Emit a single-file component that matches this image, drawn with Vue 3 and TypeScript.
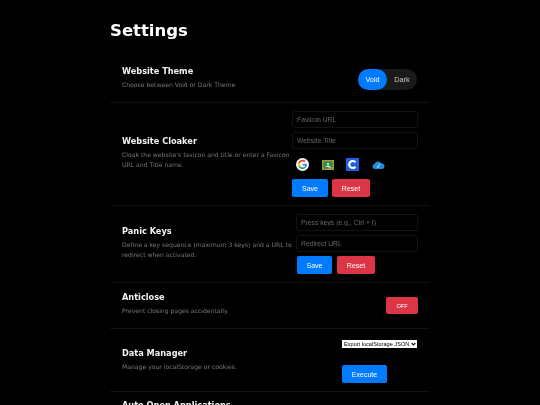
<template>
  <div class="page">
    <h1 class="page-title">Settings</h1>

    <section class="row">
      <div class="info">
        <h2>Website Theme</h2>
        <p>Choose between Void or Dark Theme</p>
      </div>
      <div class="theme-toggle">
        <span class="toggle-opt active">Void</span>
        <span class="toggle-opt">Dark</span>
      </div>
    </section>

    <section class="row">
      <div class="info">
        <h2>Website Cloaker</h2>
        <p>Cloak the website's favicon and title or enter a Favicon URL and Title name.</p>
      </div>
      <div class="controls cloak-controls">
        <input class="field" placeholder="Favicon URL" />
        <input class="field" placeholder="Website Title" />
        <div class="presets">
          <svg viewBox="0 0 48 48" width="13" height="13">
            <circle cx="24" cy="24" r="24" fill="#fff" />
            <path fill="#ea4335" d="M24 13c3 0 5.400 1 7.300 2.800l4.500-4.500C32.800 8.500 28.800 6.800 24 6.800c-6.800 0-12.600 3.900-15.400 9.500l5.300 4.100C15.200 16.200 19.200 13 24 13z" />
            <path fill="#4285f4" d="M41 24.400c0-1.300-.1-2.200-.3-3.200H24v6.200h9.700c-.4 2.300-1.700 4.300-3.800 5.600l5.100 4c3.100-2.800 6-7.300 6-12.600z" />
            <path fill="#fbbc05" d="M13.900 27.600c-.4-1.100-.6-2.300-.6-3.600s.2-2.500.6-3.600l-5.300-4.100C7.400 18.600 6.800 21.200 6.800 24s.6 5.400 1.800 7.700l5.300-4.100z" />
            <path fill="#34a853" d="M24 41.200c4.700 0 8.600-1.500 11-4.200l-5.100-4c-1.400.9-3.200 1.600-5.900 1.600-4.800 0-8.800-3.200-10.100-7l-5.300 4.100c2.800 5.600 8.600 9.500 15.400 9.500z" />
          </svg>
          <svg viewBox="0 0 24 20" width="12" height="10">
            <rect width="24" height="20" fill="#a89a35" />
            <rect x="2.500" y="2.500" width="19" height="15" fill="#3a8a4a" />
            <circle cx="12" cy="8" r="2.200" fill="#cfe8d2" />
            <path fill="#cfe8d2" d="M7.500 14c.5-2 2.400-3 4.500-3s4 1 4.500 3z" />
            <rect x="13" y="15" width="6" height="1.400" fill="#fff" />
          </svg>
          <svg viewBox="0 0 26 26" width="13" height="13">
            <rect width="26" height="26" fill="#1f5fe0" />
            <path fill="none" stroke="#fff" stroke-width="4.400" d="M18.800 8.500A7 7 0 1 0 18.800 17.500" />
          </svg>
          <svg viewBox="0 0 26 16" width="13" height="8">
            <path fill="#1d8fd6" d="M6 16a5 5 0 0 1-1-9.900A7.500 7.500 0 0 1 18.500 4.500 5.800 5.800 0 0 1 20 16z" />
            <path fill="none" stroke="#d5efff" stroke-width="1.600" d="M10 11l2 2.500 4-8" />
          </svg>
        </div>
        <div class="btn-row">
          <button class="btn btn-blue">Save</button>
          <button class="btn btn-red">Reset</button>
        </div>
      </div>
    </section>

    <section class="row">
      <div class="info">
        <h2>Panic Keys</h2>
        <p>Define a key sequence (maximum 3 keys) and a URL to redirect when activated.</p>
      </div>
      <div class="controls panic-controls">
        <input class="field" placeholder="Press keys (e.g., Ctrl + I)" />
        <input class="field" placeholder="Redirect URL" />
        <div class="btn-row panic-btns">
          <button class="btn btn-blue">Save</button>
          <button class="btn btn-red">Reset</button>
        </div>
      </div>
    </section>

    <section class="row">
      <div class="info">
        <h2>Anticlose</h2>
        <p>Prevent closing pages accidentally.</p>
      </div>
      <button class="btn btn-red btn-off">OFF</button>
    </section>

    <section class="row row-data">
      <div class="info">
        <h2>Data Manager</h2>
        <p>Manage your localStorage or cookies.</p>
      </div>
      <div class="controls data-controls">
        <div class="select-wrap">
          <select class="data-select">
            <option>Export localStorage JSON</option>
          </select>
          <svg class="select-arrow" viewBox="0 0 8 6" width="5" height="4">
            <path fill="none" stroke="#000" stroke-width="1.800" d="M1 1.500l3 3 3-3" />
          </svg>
        </div>
        <button class="btn btn-blue btn-exec">Execute</button>
      </div>
    </section>

    <section class="row-auto">
      <h2>Auto Open Applications</h2>
    </section>
  </div>
</template>

<script setup lang="ts">
</script>

<style>
html,
body {
  background: #000;
  overflow: hidden;
  height: 100%;
}
</style>

<style scoped>
.page {
  width: 320px;
  height: 405px;
  margin: 0 auto;
  padding-top: 19px;
  box-sizing: border-box;
  overflow: hidden;
  font-family: "DejaVu Sans", Verdana, sans-serif;
  color: #fff;
  filter: blur(0.3px);
}

.page-title {
  margin: 0 0 14px;
  font-size: 16.500px;
  line-height: 24px;
  font-weight: 700;
}

.row {
  display: flex;
  align-items: center;
  justify-content: space-between;
  gap: 2px;
  padding: 8px 12px;
  border-bottom: 1px solid #111;
}

.row-data {
  padding: 11px 12px 8px;
}

.row-auto {
  padding: 7px 12px 0;
}

.info {
  flex: 1;
  min-width: 0;
  padding-bottom: 4px;
}

h2 {
  margin: 0 0 3px;
  font-size: 8.200px;
  line-height: 12px;
  font-weight: 700;
  color: #f2f2f2;
}

.info p {
  margin: 0;
  font-size: 6.100px;
  line-height: 10px;
  color: #777;
}

.controls {
  display: flex;
  flex-direction: column;
  flex-shrink: 0;
}

.cloak-controls {
  width: 126px;
  gap: 4px;
}

.panic-controls {
  width: 122px;
  gap: 4px;
}

.data-controls {
  width: 75px;
  margin-right: 1px;
  gap: 17px;
  align-items: flex-start;
}

.field {
  box-sizing: border-box;
  width: 100%;
  height: 17px;
  padding: 0 4px;
  background: #000;
  border: 1px solid #131313;
  border-radius: 3px;
  outline: none;
  color: #fff;
  font-family: "Liberation Sans", Arial, sans-serif;
  font-size: 6.800px;
}

.field::placeholder {
  color: #666;
}

.presets {
  display: flex;
  align-items: center;
  justify-content: space-between;
  width: 89px;
  height: 13px;
  margin: 5px 0 4px 4px;
}

.btn-row {
  display: flex;
  gap: 4px;
}

.panic-btns {
  gap: 5px;
  margin-left: 1px;
}

.panic-btns .btn-blue {
  width: 35px;
}

.btn {
  height: 18px;
  padding: 0;
  border: none;
  border-radius: 2px;
  color: #fff;
  font-family: "Liberation Sans", Arial, sans-serif;
  font-size: 7px;
}

.btn-blue {
  width: 36px;
  background: #007bff;
}

.btn-red {
  width: 38px;
  background: #dc3545;
}

.btn-off {
  flex-shrink: 0;
  width: 32px;
  height: 17px;
  font-size: 5.600px;
}

.btn-exec {
  width: 45px;
}

.select-wrap {
  position: relative;
  width: 75px;
  height: 8px;
}

.data-select {
  display: block;
  appearance: none;
  box-sizing: border-box;
  width: 75px;
  height: 8px;
  padding: 0 0 0 2px;
  border: none;
  border-radius: 0;
  background: #fff;
  color: #000;
  font-family: "Liberation Sans", Arial, sans-serif;
  font-size: 5.600px;
  line-height: 8px;
}

.select-arrow {
  position: absolute;
  right: 1px;
  top: 2px;
}

.theme-toggle {
  display: flex;
  align-items: center;
  flex-shrink: 0;
  width: 59px;
  height: 21px;
  margin-right: 1px;
  background: #1a1a1a;
  border-radius: 11px;
  font-family: "Liberation Sans", Arial, sans-serif;
  font-size: 7.300px;
}

.toggle-opt {
  width: 30px;
  height: 21px;
  line-height: 21px;
  text-align: center;
  color: #c8c8c8;
  border-radius: 11px;
}

.toggle-opt.active {
  width: 29px;
  background: #007bff;
  color: #fff;
}
</style>
